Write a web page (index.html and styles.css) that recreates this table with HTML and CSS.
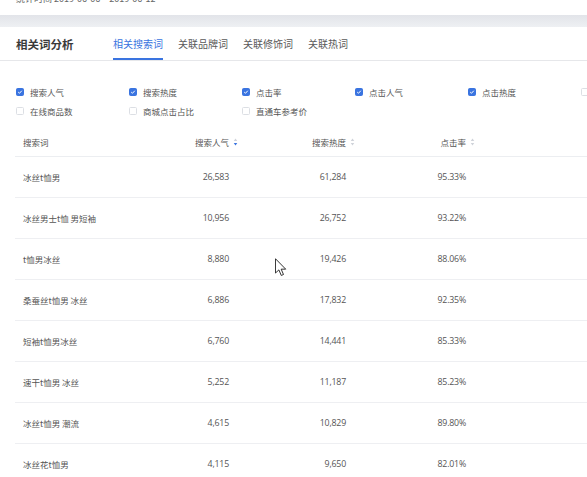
FILE: index.html
```html
<!DOCTYPE html>
<html lang="zh">
<head>
<meta charset="utf-8">
<link rel="stylesheet" href="styles.css">
</head>
<body>
<div class="topstrip"><div class="period">统计时间 2019-06-06 ~ 2019-06-12</div></div>
<div class="band"></div>
<div class="card">
  <div class="head">
    <div class="title">相关词分析</div>
    <div class="tabs">
      <div class="tab active">相关搜索词</div>
      <div class="tab">关联品牌词</div>
      <div class="tab">关联修饰词</div>
      <div class="tab">关联热词</div>
    </div>
  </div>
  <div class="checks">
    <label class="ck"><span class="box on"><svg viewBox="0 0 8 8"><path d="M1.6 4.1 L3.3 5.7 L6.4 2.3" fill="none" stroke="#fff" stroke-width="1.3"/></svg></span>搜索人气</label>
    <label class="ck"><span class="box on"><svg viewBox="0 0 8 8"><path d="M1.6 4.1 L3.3 5.7 L6.4 2.3" fill="none" stroke="#fff" stroke-width="1.3"/></svg></span>搜索热度</label>
    <label class="ck"><span class="box on"><svg viewBox="0 0 8 8"><path d="M1.6 4.1 L3.3 5.7 L6.4 2.3" fill="none" stroke="#fff" stroke-width="1.3"/></svg></span>点击率</label>
    <label class="ck"><span class="box on"><svg viewBox="0 0 8 8"><path d="M1.6 4.1 L3.3 5.7 L6.4 2.3" fill="none" stroke="#fff" stroke-width="1.3"/></svg></span>点击人气</label>
    <label class="ck"><span class="box on"><svg viewBox="0 0 8 8"><path d="M1.6 4.1 L3.3 5.7 L6.4 2.3" fill="none" stroke="#fff" stroke-width="1.3"/></svg></span>点击热度</label>
    <label class="ck"><span class="box"></span></label>
    <label class="ck"><span class="box"></span>在线商品数</label>
    <label class="ck"><span class="box"></span>商城点击占比</label>
    <label class="ck"><span class="box"></span>直通车参考价</label>
  </div>
  <div class="table">
    <div class="row hdr">
      <div class="c1">搜索词</div>
      <div class="num">搜索人气<span class="sort"><svg viewBox="0 0 5 9"><path d="M2.5 0.5 L4.5 3.5 L0.5 3.5Z" fill="#cfd3da"/><path d="M2.5 8.5 L4.5 5.5 L0.5 5.5Z" fill="#3a74e0"/></svg></span></div>
      <div class="num">搜索热度<span class="sort"><svg viewBox="0 0 5 9"><path d="M2.5 0.5 L4.5 3.5 L0.5 3.5Z" fill="#cfd3da"/><path d="M2.5 8.5 L4.5 5.5 L0.5 5.5Z" fill="#cfd3da"/></svg></span></div>
      <div class="num">点击率<span class="sort"><svg viewBox="0 0 5 9"><path d="M2.5 0.5 L4.5 3.5 L0.5 3.5Z" fill="#cfd3da"/><path d="M2.5 8.5 L4.5 5.5 L0.5 5.5Z" fill="#cfd3da"/></svg></span></div>
    </div>
    <div class="row"><div class="c1">冰丝t恤男</div><div class="num">26,583</div><div class="num">61,284</div><div class="num">95.33%</div></div>
    <div class="row"><div class="c1">冰丝男士t恤 男短袖</div><div class="num">10,956</div><div class="num">26,752</div><div class="num">93.22%</div></div>
    <div class="row"><div class="c1">t恤男冰丝</div><div class="num">8,880</div><div class="num">19,426</div><div class="num">88.06%</div></div>
    <div class="row"><div class="c1">桑蚕丝t恤男 冰丝</div><div class="num">6,886</div><div class="num">17,832</div><div class="num">92.35%</div></div>
    <div class="row"><div class="c1">短袖t恤男冰丝</div><div class="num">6,760</div><div class="num">14,441</div><div class="num">85.33%</div></div>
    <div class="row"><div class="c1">速干t恤男 冰丝</div><div class="num">5,252</div><div class="num">11,187</div><div class="num">85.23%</div></div>
    <div class="row"><div class="c1">冰丝t恤男 潮流</div><div class="num">4,615</div><div class="num">10,829</div><div class="num">89.80%</div></div>
    <div class="row"><div class="c1">冰丝花t恤男</div><div class="num">4,115</div><div class="num">9,650</div><div class="num">82.01%</div></div>
  </div>
</div>
<svg class="cursor" viewBox="0 0 13 20" width="12" height="19"><path d="M0.5 0.5 L0.5 16 L4.2 12.6 L6.8 18.6 L9.2 17.6 L6.7 11.8 L11.6 11.8 Z" fill="#fff" stroke="#222" stroke-width="1" stroke-linejoin="round"/></svg>
</body>
</html>
```

FILE: styles.css
```css
html, body {
  margin: 0;
  padding: 0;
  background: #fff;
  font-family: "Noto Sans CJK SC", "Open Sans", sans-serif;
  color: #555;
  overflow: hidden;
}
.topstrip {
  height: 15px;
  overflow: hidden;
  padding-left: 16px;
}
.period {
  font-size: 9px;
  line-height: 10px;
  margin-top: -6px;
  color: #666;
}
.band {
  height: 12px;
  background: linear-gradient(#e2e4e9, #eef0f3);
}
.card {
  background: #fff;
}
.head {
  display: flex;
  align-items: center;
  height: 34px;
  border-bottom: 1px solid #e6e7ea;
  padding-left: 16px;
  box-sizing: border-box;
}
.title {
  font-size: 11.5px;
  font-weight: 700;
  color: #3a3a3a;
  width: 97px;
}
.tabs {
  display: flex;
  height: 100%;
  gap: 15px;
}
.tab {
  font-size: 10px;
  color: #5a5a5a;
  display: flex;
  align-items: center;
  height: 100%;
  box-sizing: border-box;
  border-bottom: 2px solid transparent;
  padding-top: 1px;
  margin-bottom: -1px;
}
.tab.active {
  color: #3a74e0;
  border-bottom-color: #3a74e0;
}
.checks {
  display: grid;
  grid-template-columns: repeat(6, 113px);
  row-gap: 5px;
  padding: 24px 0 0 16px;
}
.ck {
  display: flex;
  align-items: center;
  height: 14px;
  font-size: 8.5px;
  color: #555;
}
.box {
  width: 8px;
  height: 8px;
  border: 1px solid #dcdfe4;
  border-radius: 1.5px;
  box-sizing: border-box;
  margin-right: 6px;
  display: flex;
  background: #fff;
}
.box.on {
  background: #3a74e0;
  border-color: #3a74e0;
}
.box svg {
  width: 100%;
  height: 100%;
}
.table {
  margin: 9px 0 0 15px;
}
.row {
  display: grid;
  grid-template-columns: 114px 100px 117px 120px 1fr;
  height: 41px;
  align-items: center;
  border-bottom: 1px solid #eeeff2;
  box-sizing: border-box;
  font-size: 8.5px;
  color: #555;
}
.row.hdr {
  height: 30px;
  border-bottom-color: #eceef1;
}
.c1 {
  padding-left: 8px;
}
.num {
  text-align: right;
  font-family: "Open Sans", "Noto Sans CJK SC", sans-serif;
  font-size: 8.8px;
  letter-spacing: -0.2px;
}
.hdr .num {
  font-family: "Noto Sans CJK SC", sans-serif;
  font-size: 8.5px;
  letter-spacing: 0;
  position: relative;
}
.sort {
  position: absolute;
  right: -9px;
  top: 50%;
  margin-top: -4px;
  width: 5px;
  height: 8px;
  display: flex;
}
.sort svg {
  width: 5px;
  height: 8px;
}
.cursor {
  position: absolute;
  left: 275px;
  top: 258px;
}
```
